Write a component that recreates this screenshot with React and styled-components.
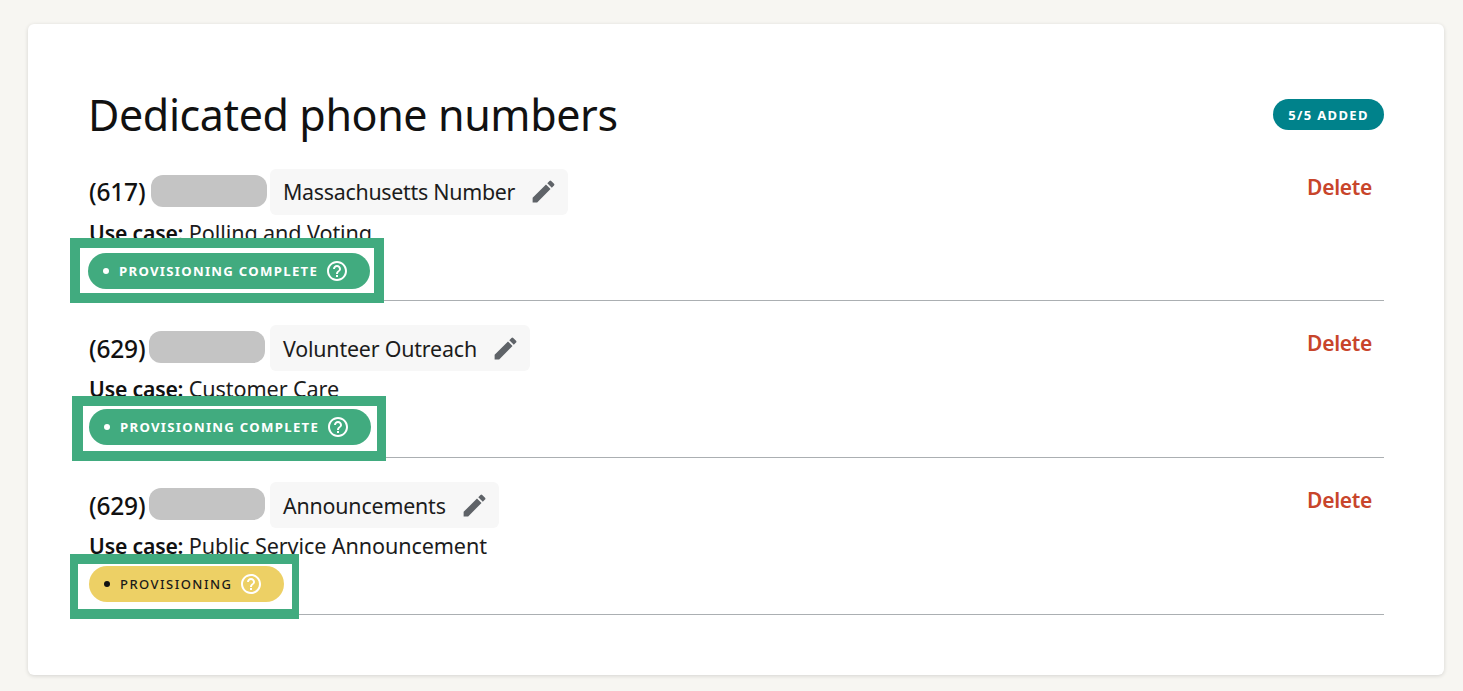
import React from "react";
import styled, { createGlobalStyle } from "styled-components";
import { MdEdit, MdHelpOutline } from "react-icons/md";

const Global = createGlobalStyle`
  html, body { margin: 0; padding: 0; background: #f7f6f2; }
  body { font-family: "Noto Sans", "Open Sans", sans-serif; color: #1a1a1a; }
`;

const Page = styled.div`
  padding: 24px 19px 16px 28px;
  height: 691px;
  box-sizing: border-box;
  overflow: hidden;
`;
const Card = styled.main`
  height: 651px;
  box-sizing: border-box;
  background: #fff;
  border-radius: 6px;
  box-shadow: 0 1px 4px rgba(0, 0, 0, 0.14);
  padding: 60px 60px 0 61px;
`;
const Header = styled.header`
  display: flex;
  justify-content: space-between;
  align-items: flex-start;
  height: 84.6px;
`;
const Title = styled.h1`
  margin: 0 0 0 -1px;
  font-size: 43px;
  line-height: 62px;
  font-weight: 400;
  letter-spacing: -0.4px;
  color: #111;
`;
const CountBadge = styled.span`
  margin-top: 15px;
  height: 31px;
  width: 111px;
  display: flex;
  align-items: center;
  justify-content: center;
  border-radius: 16px;
  background: #00828b;
  color: #fff;
  font-size: 13px;
  font-weight: 700;
  letter-spacing: 1.35px;
`;
const Row = styled.section`
  height: 132.4px;
  box-sizing: border-box;
  border-bottom: 1px solid #abafb2;
  margin-bottom: 24.4px;
  display: flex;
  justify-content: space-between;
  align-items: flex-start;
`;
const Info = styled.div`
  display: flex;
  flex-direction: column;
  align-items: flex-start;
`;
const PhoneLine = styled.div`
  display: flex;
  align-items: center;
  height: 46px;
`;
const AreaCode = styled.span`
  font-size: 24.5px;
  font-weight: 500;
  letter-spacing: -0.2px;
  color: #111;
  width: ${(p) => p.$width}px;
`;
const Redacted = styled.span`
  width: 116px;
  height: 32px;
  margin-bottom: 2px;
  border-radius: 12px;
  background: #c4c4c4;
`;
const NameChip = styled.span`
  margin-left: ${(p) => p.$gap}px;
  height: 46px;
  box-sizing: border-box;
  padding: 0 10px 0 13px;
  display: flex;
  align-items: center;
  gap: 14px;
  background: #f7f7f7;
  border-radius: 6px;
  font-size: 21.4px;
  letter-spacing: ${(p) => p.$tracking}px;
  color: #1c1c1c;
  svg { color: #5f6368; flex: none; }
`;
const UseCase = styled.p`
  margin: 3px 0 0;
  font-size: 21.6px;
  line-height: 30px;
  letter-spacing: -0.1px;
  color: #1c1c1c;
  white-space: nowrap;
  b { font-size: 21.2px; letter-spacing: -0.18px; font-weight: 600; color: #111; }
`;
const HighlightFrame = styled.div`
  position: relative;
  box-sizing: border-box;
  display: flex;
  align-items: flex-start;
  margin: ${(p) => p.$offsetTop}px 0 0 ${(p) => p.$offsetLeft}px;
  width: ${(p) => p.$width}px;
  height: 65px;
  background: #fff;
  border: solid #41ab7f;
  border-width: 10px ${(p) => p.$right}px 10px ${(p) => p.$left}px;
  padding: ${(p) => p.$padTop}px 0 0 ${(p) => p.$padLeft}px;
`;
const StatusBadge = styled.span`
  display: flex;
  align-items: center;
  height: 36px;
  width: ${(p) => p.$width}px;
  flex: none;
  box-sizing: border-box;
  padding-left: 15px;
  border-radius: 18px;
  background: ${(p) => (p.$done ? "#41ab7f" : "#edd065")};
  color: ${(p) => (p.$done ? "#fff" : "#1a1a1a")};
  font-size: ${(p) => (p.$done ? 13.2 : 13)}px;
  font-weight: ${(p) => (p.$done ? 700 : 500)};
  letter-spacing: ${(p) => (p.$done ? 1.28 : 1.45)}px;
  white-space: nowrap;
  svg { color: #fff; flex: none; margin-left: 7px; }
`;
const Dot = styled.i`
  width: 6px;
  height: 6px;
  border-radius: 50%;
  margin-right: 10px;
  background: ${(p) => (p.$done ? "#fff" : "#111")};
  flex: none;
`;
const DeleteButton = styled.button`
  border: 0;
  background: none;
  padding: 0;
  margin: 3px 12px 0 0;
  font-family: inherit;
  font-size: 21px;
  line-height: 30px;
  font-weight: 600;
  letter-spacing: -0.3px;
  color: #c8452b;
`;

const rows = [
  { area: "(617)", areaW: 62, gap: 3, name: "Massachusetts Number", tracking: -0.28, use: "Polling and Voting", status: "PROVISIONING COMPLETE", done: true, badgeW: 282, frame: { top: -10, left: 10, right: 10, ol: -19, w: 314, padLeft: 8, padTop: 5 } },
  { area: "(629)", areaW: 60, gap: 5, name: "Volunteer Outreach", tracking: -0.18, use: "Customer Care", status: "PROVISIONING COMPLETE", done: true, badgeW: 282, frame: { top: -8.4, left: 11, right: 9, ol: -17, w: 314, padLeft: 6, padTop: 3 } },
  { area: "(629)", areaW: 60, gap: 5, name: "Announcements", tracking: -0.18, use: "Public Service Announcement", status: "PROVISIONING", done: false, badgeW: 195, frame: { top: -7.2, left: 8, right: 7, ol: -19, w: 229, padLeft: 11, padTop: 2 } },
];

export default function App() {
  return (
    <Page>
      <Global />
      <Card>
        <Header>
          <Title>Dedicated phone numbers</Title>
          <CountBadge>5/5 ADDED</CountBadge>
        </Header>
        {rows.map((r, i) => (
          <Row key={i}>
            <Info>
              <PhoneLine>
                <AreaCode $width={r.areaW}>{r.area}</AreaCode>
                <Redacted />
                <NameChip $gap={r.gap} $tracking={r.tracking}>
                  {r.name}
                  <MdEdit size={29} />
                </NameChip>
              </PhoneLine>
              <UseCase>
                <b>Use case:</b> {r.use}
              </UseCase>
              <HighlightFrame
                $offsetTop={r.frame.top}
                $offsetLeft={r.frame.ol}
                $width={r.frame.w}
                $left={r.frame.left}
                $right={r.frame.right}
                $padLeft={r.frame.padLeft}
                $padTop={r.frame.padTop}
              >
                <StatusBadge $done={r.done} $width={r.badgeW}>
                  <Dot $done={r.done} />
                  {r.status}
                  <MdHelpOutline size={24} />
                </StatusBadge>
              </HighlightFrame>
            </Info>
            <DeleteButton>Delete</DeleteButton>
          </Row>
        ))}
      </Card>
    </Page>
  );
}
